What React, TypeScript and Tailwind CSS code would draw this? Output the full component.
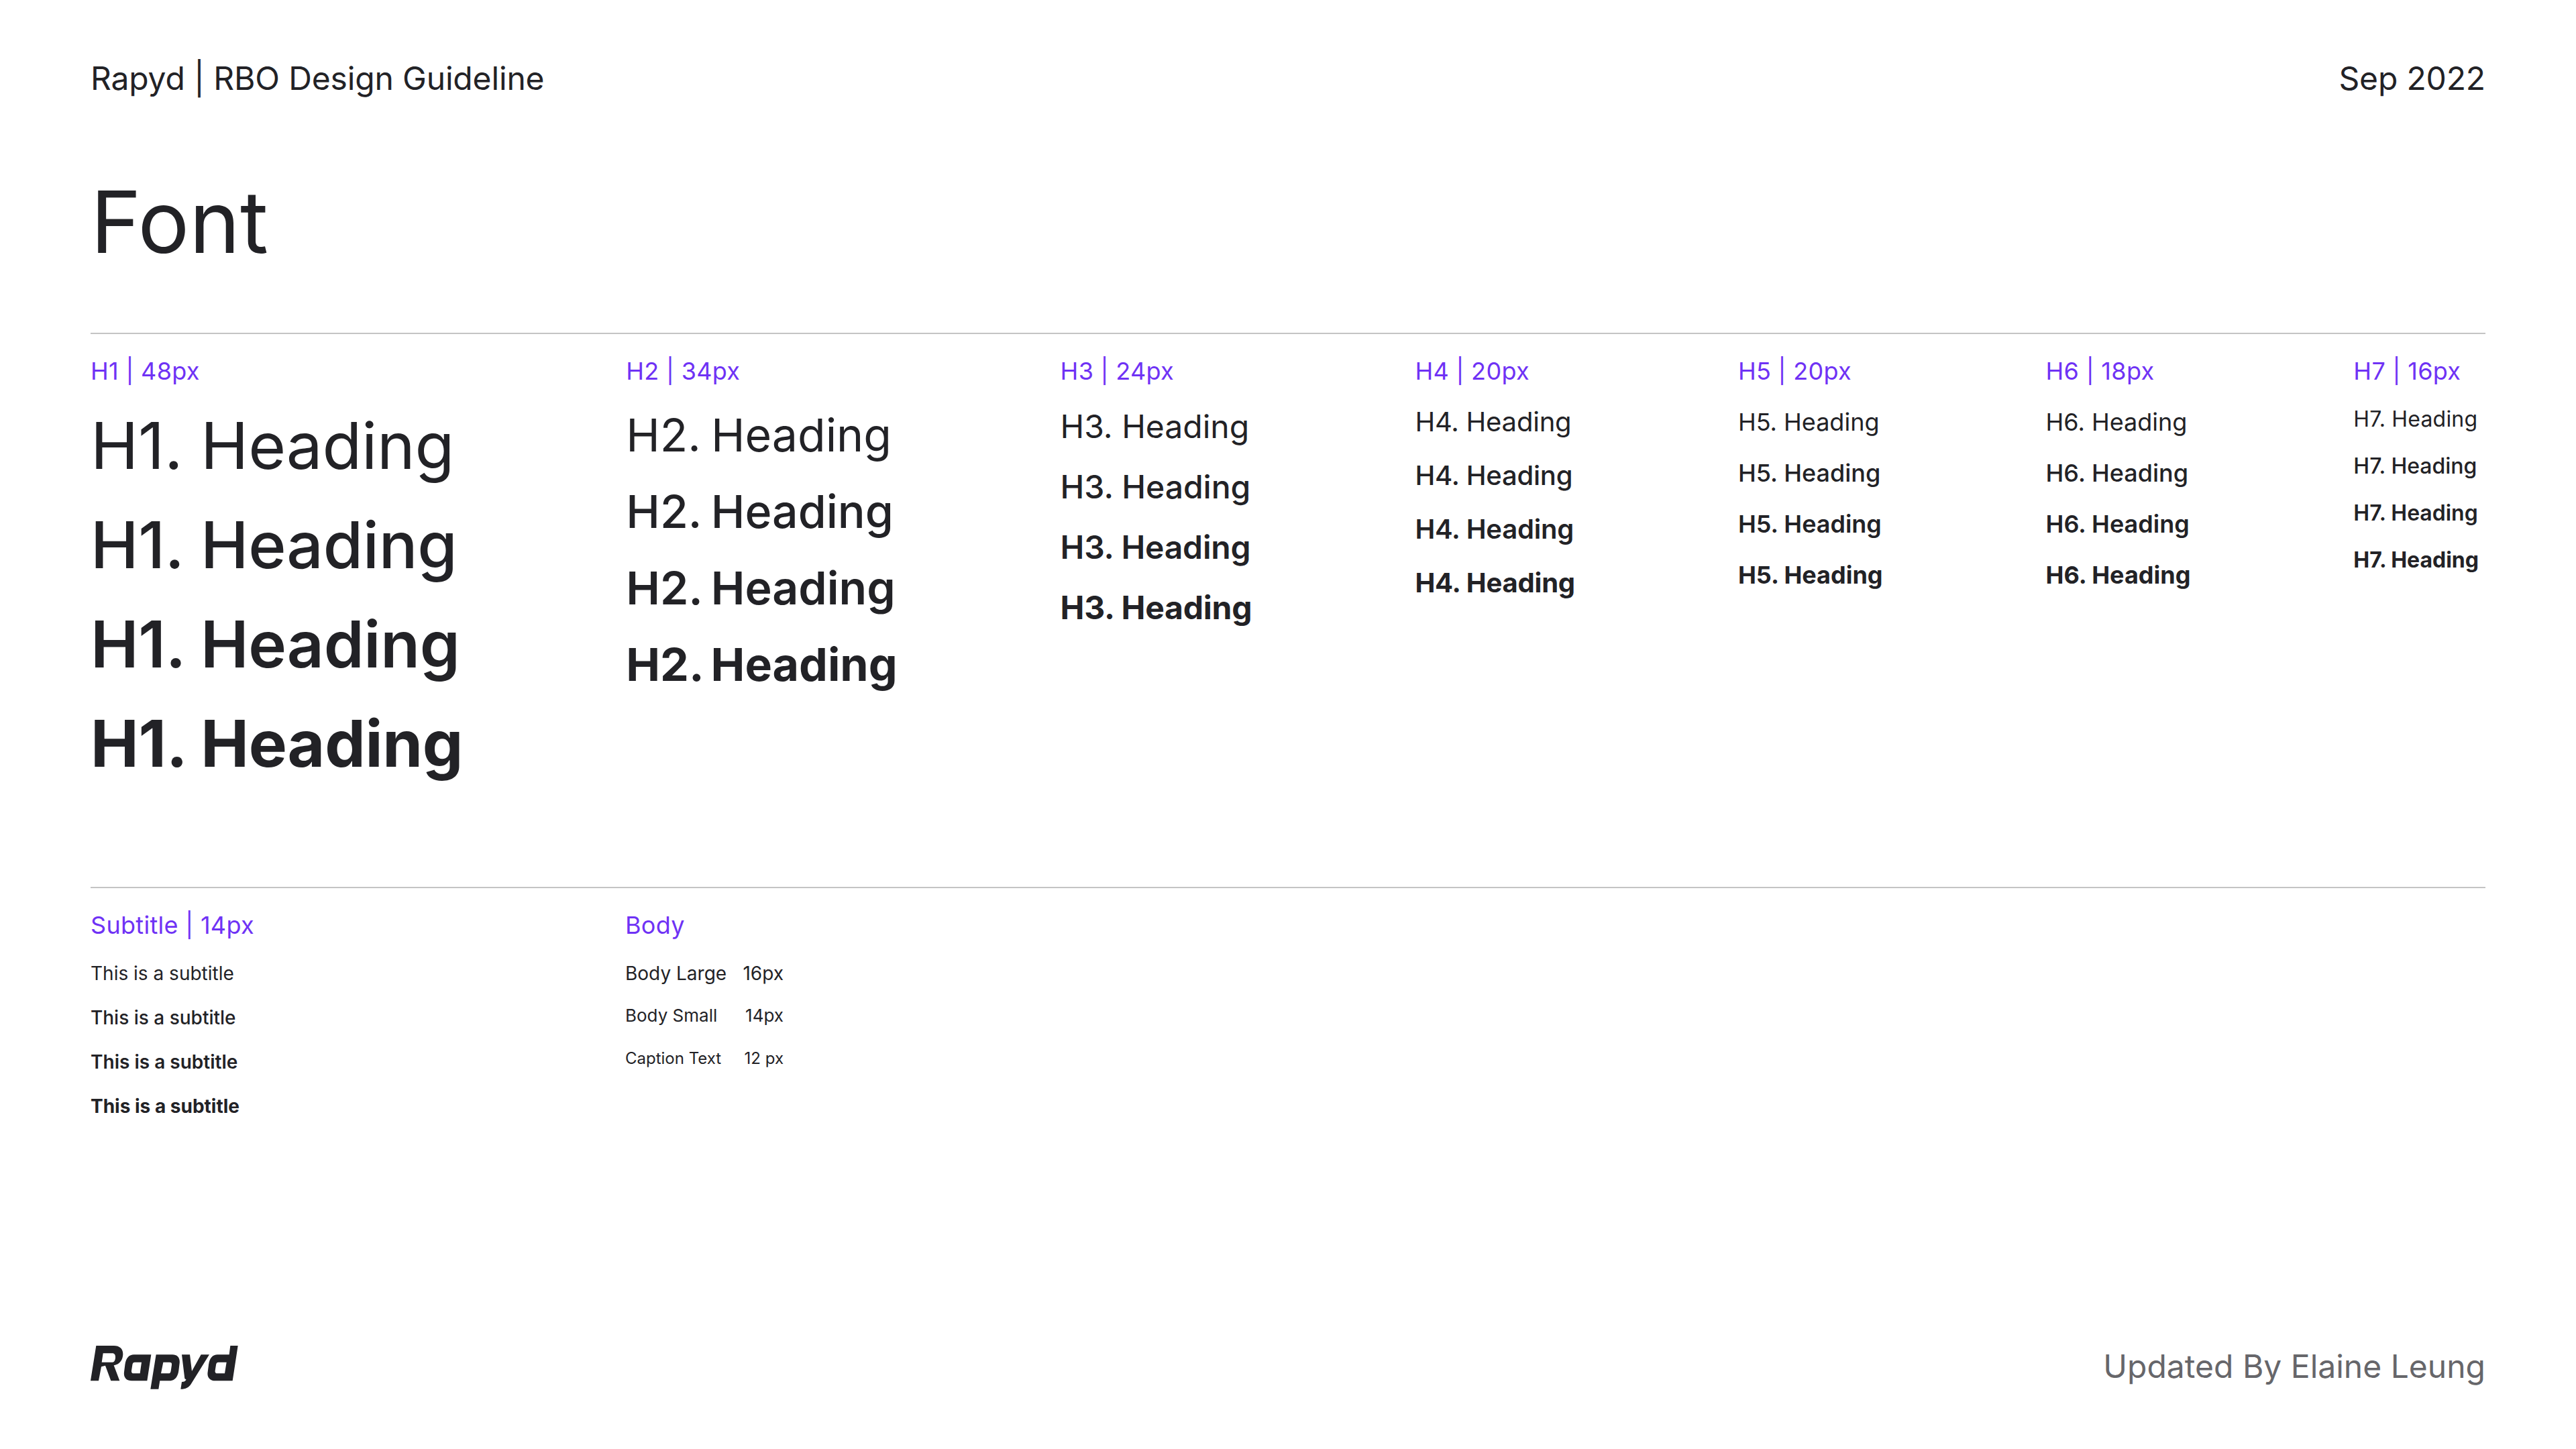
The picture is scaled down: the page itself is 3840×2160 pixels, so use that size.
const ink = "text-[#222226]";

function Logo() {
  return (
    <svg width="220" height="66" viewBox="102 138 660 198" className="block" fill="#222226" fillRule="evenodd">
      <path d="M127 138H206C236 138 251 157 246 185C242 208 228 222 206 226L232 295H193L168 227L150 232L138 295H102ZM158 172L152 212H200C208 212 212 204 213 192C214 180 209 172 200 172Z" />
      <path d="M296 178H373L355 295H286C262 295 249 280 252 256L256 224C260 194 274 178 296 178ZM300 212C293 212 290 216 289 224L285 250C284 258 287 262 295 262H323L330 212Z" />
      <path d="M395 178H468C490 178 503 192 500 217L496 250C492 279 478 295 455 295H412L406 332H370ZM427 212L417 262H450C457 262 460 258 461 251L465 224C466 216 463 212 455 212Z" />
      <path d="M510 178H546L555 252L596 178H633L552 308C542 324 528 332 505 332L510 300C520 300 526 296 530 290L523 285Z" />
      <path d="M727 138H761L737 295H660C636 295 622 280 626 256L630 224C634 194 648 178 670 178H722ZM674 212C667 212 664 216 663 224L659 250C658 258 661 262 669 262H702L710 212Z" />
    </svg>
  );
}

function Label({ children }: { children: string }) {
  return <div className="text-[36px] leading-[44px] text-[#6f32f5] whitespace-nowrap tracking-[0.3px]">{children}</div>;
}

function HeadingCol({ label, text, size, tracks, gap = "gap-[32px]", top = "mt-[32px]" }: { label: string; text: string; size: string; tracks: string[]; gap?: string; top?: string }) {
  const weights = ["font-normal", "font-medium", "font-semibold", "font-bold"];
  return (
    <div className="flex flex-col">
      <Label>{label}</Label>
      <div className={`flex flex-col ${gap} ${top}`}>
        {weights.map((w, i) => (
          <div key={w} className={`${size} ${w} ${tracks[i]} ${ink} whitespace-nowrap`}>{text}</div>
        ))}
      </div>
    </div>
  );
}

export default function App() {
  return (
    <div className="w-[3840px] h-[2160px] bg-white flex flex-col px-[135px] font-['Inter',sans-serif] overflow-hidden">
      <div className={`flex justify-between items-center pt-[88px] text-[48px] leading-[58px] tracking-[-0.15px] ${ink}`}>
        <div>Rapyd | RBO Design Guideline</div>
        <div>Sep 2022</div>
      </div>
      <div className={`text-[128px] leading-[156px] font-normal mt-[107px] ${ink}`}>Font</div>
      <div className="h-[2px] bg-[#c4c4c4] mt-[87px]" />
      <div className="flex justify-between mt-[33px] h-[791px] pr-[10px]">
        <HeadingCol label="H1 | 48px" text="H1. Heading" size="text-[96px] leading-[116px]" top="mt-[31px]" tracks={["tracking-[-0.25px]", "tracking-[-0.25px]", "tracking-[-0.25px]", "tracking-[-0.2px]"]} />
        <HeadingCol label="H2 | 34px" text="H2. Heading" size="text-[68px] leading-[82px] [word-spacing:-4px]" tracks={["tracking-[0px]", "tracking-[0px]", "tracking-[0px]", "tracking-[0px]"]} />
        <HeadingCol label="H3 | 24px" text="H3. Heading" size="text-[48px] leading-[58px]" tracks={["tracking-[0px]", "tracking-[0px]", "tracking-[-0.2px]", "tracking-[-0.2px]"]} />
        <HeadingCol label="H4 | 20px" text="H4. Heading" size="text-[40px] leading-[48px]" top="mt-[30px]" tracks={["tracking-[-0.2px]", "tracking-[-0.2px]", "tracking-[-0.2px]", "tracking-[-0.2px]"]} />
        <HeadingCol label="H5 | 20px" text="H5. Heading" size="text-[36px] leading-[44px]" tracks={["tracking-[0px]", "tracking-[0px]", "tracking-[0px]", "tracking-[0px]"]} />
        <HeadingCol label="H6 | 18px" text="H6. Heading" size="text-[36px] leading-[44px]" tracks={["tracking-[0px]", "tracking-[0px]", "tracking-[0px]", "tracking-[0px]"]} />
        <HeadingCol label="H7 | 16px" text="H7. Heading" size="text-[32px] leading-[40px]" gap="gap-[30px]" top="mt-[30px]" tracks={["tracking-[0.2px]", "tracking-[0px]", "tracking-[0px]", "tracking-[0px]"]} />
      </div>
      <div className="h-[2px] bg-[#c4c4c4]" />
      <div className="flex mt-[33px]">
        <div className="w-[797px] flex flex-col">
          <Label>Subtitle | 14px</Label>
          <div className={`flex flex-col gap-[32px] mt-[33px] text-[28px] leading-[34px] ${ink}`}>
            <div className="font-normal">This is a subtitle</div>
            <div className="font-medium">This is a subtitle</div>
            <div className="font-semibold">This is a subtitle</div>
            <div className="font-bold">This is a subtitle</div>
          </div>
        </div>
        <div className="flex flex-col">
          <Label>Body</Label>
          <div className={`flex flex-col mt-[33px] w-[236px] ${ink}`}>
            <div className="flex justify-between text-[28px] leading-[34px]"><span>Body Large</span><span>16px</span></div>
            <div className="flex justify-between text-[26px] leading-[32px] mt-[30px]"><span>Body Small</span><span>14px</span></div>
            <div className="flex justify-between text-[24px] leading-[30px] mt-[33px]"><span>Caption Text</span><span>12 px</span></div>
          </div>
        </div>
      </div>
      <div className="mt-auto pb-[88px] flex justify-between items-center">
        <Logo />
        <div className="text-[48px] leading-[58px] text-[#66666a] -translate-y-[2px]">Updated By Elaine Leung</div>
      </div>
    </div>
  );
}
